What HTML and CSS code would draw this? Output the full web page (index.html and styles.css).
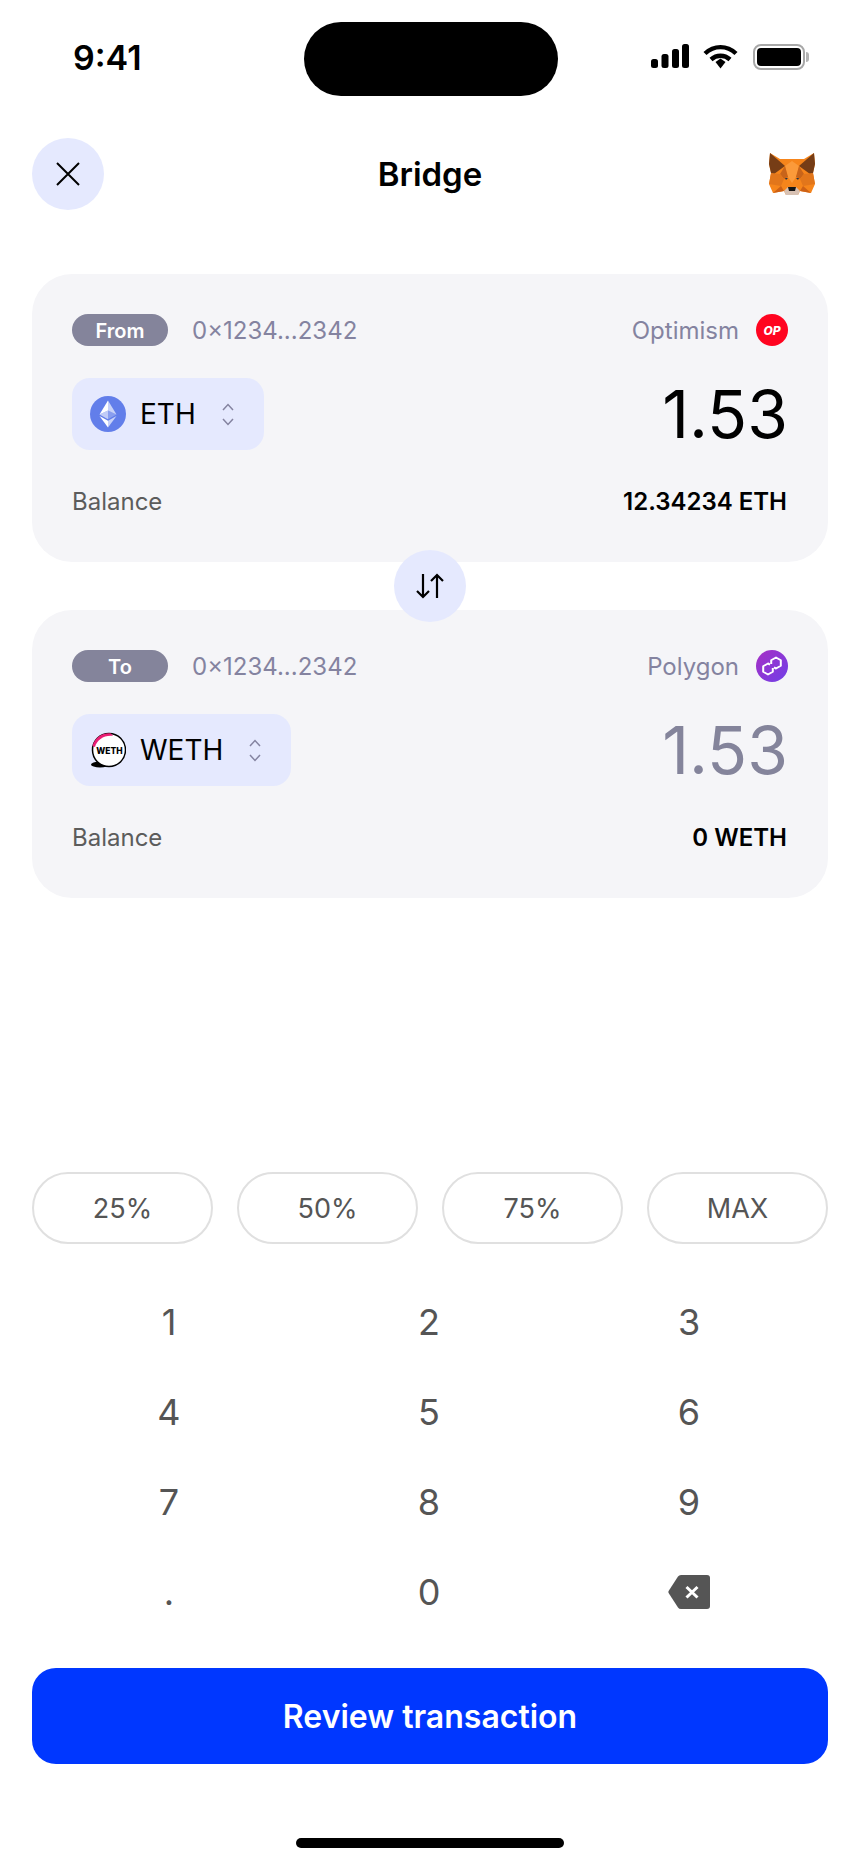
FILE: index.html
```html
<!DOCTYPE html>
<html lang="en">
<head>
  <meta charset="UTF-8" />
  <meta name="viewport" content="width=device-width, initial-scale=1.0" />
  <title>Bridge</title>
  <link rel="stylesheet" href="styles.css">
</head>
<body>
  <div class="phone">
    <div class="status-bar">
      <span class="time">9:41</span>
      <div class="island"></div>
      <div class="status-icons">
        <svg class="signal" width="38" height="24" viewBox="0 0 38 24" fill="#000">
          <rect x="0" y="15" width="7" height="9" rx="2.5" />
          <rect x="10.5" y="10" width="7" height="14" rx="2.5" />
          <rect x="21" y="5" width="7" height="19" rx="2.5" />
          <rect x="31" y="0" width="7" height="24" rx="2.5" />
        </svg>
        <svg class="wifi" width="35" height="25" viewBox="0 0 35 25" fill="none" stroke="#000" stroke-width="4.4">
          <path d="M2 9.5C11 1 24 1 33 9.5" />
          <path d="M8 15.5C13.5 10.5 21.5 10.5 27 15.5" />
          <path d="M12.5 18L17.5 14.5L22.5 18L17.5 24.5Z" fill="#000" stroke="none" />
        </svg>
        <div class="battery"><div class="battery-fill"></div></div>
      </div>
    </div>

    <header class="top-bar">
      <button class="round-btn">
        <svg width="24" height="24" viewBox="0 0 24 24" fill="none" stroke="#000" stroke-width="2">
          <path d="M1 1L23 23M23 1L1 23" />
        </svg>
      </button>
      <h1>Bridge</h1>
      <svg class="fox" width="46" height="42" viewBox="0 0 46 42">
        <polygon fill="#f6851b" points="1,0 11,6 35,6 45,0 46,11 44,20 46,31 42,40 31,38 29,42 17,42 15,38 4,40 0,31 2,20 0,11" />
        <polygon fill="#763d16" points="1,0 16,13 5,21 2,20 0,11" />
        <polygon fill="#763d16" points="45,0 30,13 41,21 44,20 46,11" />
        <polygon fill="#fb9a3a" points="16,13 23,8 30,13 27,24 23,30 19,24" />
        <polygon fill="#c8641a" points="11,21 16,13 19,24 15,26" />
        <polygon fill="#c8641a" points="35,21 30,13 27,24 31,26" />
        <polygon fill="#233447" points="16,25 19,25 17,27" />
        <polygon fill="#233447" points="30,25 27,25 29,27" />
        <polygon fill="#e2761b" points="2,20 11,21 15,26 12,33 0,31" />
        <polygon fill="#e2761b" points="44,20 35,21 31,26 34,33 46,31" />
        <polygon fill="#cd6116" points="4,40 12,33 15,38" />
        <polygon fill="#cd6116" points="42,40 34,33 31,38" />
        <polygon fill="#d7c1b3" points="15,38 19,34 27,34 31,38 29,42 17,42" />
        <polygon fill="#161616" points="19,34 27,34 26,38 20,38" />
      </svg>
    </header>

    <main class="cards">
      <section class="card">
        <div class="card-row">
          <div class="account">
            <span class="pill">From</span>
            <span class="address">0×1234...2342</span>
          </div>
          <div class="network">
            <span>Optimism</span>
            <span class="badge badge-op">OP</span>
          </div>
        </div>
        <div class="card-row token-row">
          <button class="token">
            <svg width="36" height="36" viewBox="0 0 36 36">
              <circle cx="18" cy="18" r="18" fill="#627eea" />
              <polygon fill="#fff" fill-opacity=".65" points="18,4.5 18,14.5 26.5,18.4" />
              <polygon fill="#fff" points="18,4.5 9.5,18.4 18,14.5" />
              <polygon fill="#fff" fill-opacity=".65" points="18,24.8 18,31.5 26.5,20" />
              <polygon fill="#fff" points="18,31.5 18,24.8 9.5,20" />
              <polygon fill="#fff" fill-opacity=".25" points="18,23.2 26.5,18.4 18,14.5" />
              <polygon fill="#fff" fill-opacity=".6" points="9.5,18.4 18,23.2 18,14.5" />
            </svg>
            <span class="token-name">ETH</span>
            <svg class="chevrons" width="12" height="24" viewBox="0 0 12 24" fill="none" stroke="#8483a0" stroke-width="1.5">
              <path d="M1 8L6 2.5L11 8M1 17L6 22.5L11 17" />
            </svg>
          </button>
          <span class="amount">1.53</span>
        </div>
        <div class="card-row balance-row">
          <span class="balance-label">Balance</span>
          <span class="balance-value">12.34234 ETH</span>
        </div>
      </section>

      <button class="round-btn swap">
        <svg width="28" height="26" viewBox="0 0 28 26" fill="none" stroke="#000" stroke-width="2.2">
          <path d="M7 1V24M1 18L7 24L13 18" />
          <path d="M21 25V2M15 8L21 2L27 8" />
        </svg>
      </button>

      <section class="card">
        <div class="card-row">
          <div class="account">
            <span class="pill">To</span>
            <span class="address">0×1234...2342</span>
          </div>
          <div class="network">
            <span>Polygon</span>
            <span class="badge badge-polygon">
              <svg width="22" height="20" viewBox="0 0 22 20" fill="none" stroke="#fff" stroke-width="2" stroke-linejoin="round">
                <path d="M11.800 12V15.750L7 18.500L2.200 15.750V10.250L7 7.500L9 8.600" />
                <path d="M10.200 8V4.250L15 1.500L19.800 4.250V9.750L15 12.500L13 11.400" />
              </svg>
            </span>
          </div>
        </div>
        <div class="card-row token-row">
          <button class="token">
            <svg width="36" height="36" viewBox="0 0 36 36">
              <ellipse cx="10" cy="32.5" rx="9" ry="3" fill="#000" />
              <circle cx="19" cy="18" r="16.5" fill="#fff" stroke="#000" stroke-width="1.5" />
              <path d="M2.5 14C5 5 13 0.5 21 1.5L23 4C14 3 7 8 5 15Z" fill="#ea1e74" />
              <text class="weth-mark" x="19.5" y="21.5" text-anchor="middle">WETH</text>
            </svg>
            <span class="token-name">WETH</span>
            <svg class="chevrons" width="12" height="24" viewBox="0 0 12 24" fill="none" stroke="#8483a0" stroke-width="1.5">
              <path d="M1 8L6 2.5L11 8M1 17L6 22.5L11 17" />
            </svg>
          </button>
          <span class="amount amount-muted">1.53</span>
        </div>
        <div class="card-row balance-row">
          <span class="balance-label">Balance</span>
          <span class="balance-value">0 WETH</span>
        </div>
      </section>
    </main>

    <div class="percents">
      <button class="percent">25%</button>
      <button class="percent">50%</button>
      <button class="percent">75%</button>
      <button class="percent">MAX</button>
    </div>

    <div class="keypad">
      <button class="key">1</button>
      <button class="key">2</button>
      <button class="key">3</button>
      <button class="key">4</button>
      <button class="key">5</button>
      <button class="key">6</button>
      <button class="key">7</button>
      <button class="key">8</button>
      <button class="key">9</button>
      <button class="key">.</button>
      <button class="key">0</button>
      <button class="key">
        <svg width="42" height="34" viewBox="0 0 42 34">
          <path fill="#555" d="M10 1.5Q11 0 13 0H39Q42 0 42 3V31Q42 34 39 34H13Q11 34 10 32.500L0.600 18Q0 17 0.600 16Z" />
          <path fill="none" stroke="#fff" stroke-width="3" d="M18.500 12L29.500 22.500M29.500 12L18.500 22.500" />
        </svg>
      </button>
    </div>

    <button class="review">Review transaction</button>
    <div class="home-indicator"></div>
  </div>
</body>
</html>
```

FILE: styles.css
```css
* {
  box-sizing: border-box;
}

body {
  margin: 0;
  background-color: #fff;
  font-family: Inter, "Liberation Sans", sans-serif;
  color: #000;
}

button {
  border: none;
  padding: 0;
  background: none;
  font-family: inherit;
  cursor: pointer;
}

.phone {
  width: 860px;
  height: 1864px;
  overflow: hidden;
  display: flex;
  flex-direction: column;
}

.status-bar {
  display: grid;
  grid-template-columns: 304px 254px 1fr;
  height: 138px;
  padding-top: 22px;
}

.time {
  padding: 16px 0 0 73px;
  font-size: 34px;
  line-height: 40px;
  font-weight: 600;
}

.island {
  height: 74px;
  border-radius: 37px;
  background-color: #000;
}

.status-icons {
  display: flex;
  align-items: flex-start;
  padding: 22px 0 0 93px;
}

.wifi {
  margin-left: 14px;
}

.battery {
  position: relative;
  width: 52px;
  height: 26px;
  margin-left: 15px;
  padding: 2px;
  border: 2px solid #a8a8a8;
  border-radius: 8px;
}

.battery::after {
  content: "";
  position: absolute;
  top: 6px;
  right: -6px;
  width: 3px;
  height: 10px;
  border-radius: 0 3px 3px 0;
  background-color: #b4b4b4;
}

.battery-fill {
  height: 100%;
  border-radius: 4px;
  background-color: #000;
}

.top-bar {
  display: grid;
  grid-template-columns: 72px 1fr 72px;
  align-items: center;
  justify-items: center;
  margin: 0 32px;
}

.top-bar h1 {
  margin: 0;
  font-size: 33px;
  font-weight: 600;
}

.round-btn {
  display: flex;
  align-items: center;
  justify-content: center;
  width: 72px;
  height: 72px;
  border-radius: 50%;
  background-color: #e5e9fe;
}

.cards {
  position: relative;
  display: flex;
  flex-direction: column;
  gap: 48px;
  margin: 64px 32px 0;
}

.swap {
  position: absolute;
  top: 276px;
  left: 362px;
}

.card {
  padding: 40px 40px 44px;
  border-radius: 40px;
  background-color: #f5f5f8;
}

.card-row {
  display: flex;
  align-items: center;
  justify-content: space-between;
}

.account,
.network {
  display: flex;
  align-items: center;
}

.pill {
  width: 96px;
  height: 32px;
  border-radius: 16px;
  background-color: #84849b;
  color: #fff;
  font-size: 20px;
  line-height: 35px;
  font-weight: 600;
  text-align: center;
}

.address {
  margin-left: 24px;
  font-size: 24px;
  color: #8483a0;
}

.network {
  font-size: 24px;
  color: #8483a0;
}

.badge {
  display: flex;
  align-items: center;
  justify-content: center;
  width: 32px;
  height: 32px;
  margin-left: 17px;
  border-radius: 50%;
  color: #fff;
}

.badge-op {
  background-color: #ff0420;
  font-size: 12px;
  font-weight: 800;
  font-style: italic;
}

.badge-polygon {
  background: linear-gradient(135deg, #a72fc4, #7040e8);
}

.token-row {
  margin-top: 32px;
}

.token {
  display: flex;
  align-items: center;
  height: 72px;
  padding: 0 30px 0 18px;
  border-radius: 18px;
  background-color: #e5e9fe;
}

.token-name {
  margin: 0 26px 0 14px;
  font-size: 28px;
  font-weight: 400;
  color: #000;
}

.amount {
  font-size: 66px;
  line-height: 72px;
  font-weight: 400;
}

.amount-muted {
  color: #84849b;
}

.balance-row {
  margin-top: 36px;
  line-height: 32px;
}

.balance-label {
  font-size: 24px;
  color: #5c5c5c;
}

.balance-value {
  margin-right: 1px;
  font-size: 24px;
  font-weight: 600;
}

.weth-mark {
  font-size: 8.5px;
  font-weight: 800;
  fill: #000;
}

.percents {
  display: grid;
  grid-template-columns: repeat(4, 1fr);
  gap: 24px;
  margin: 274px 32px 0;
}

.percent {
  height: 72px;
  border: 2px solid #e0e0e0;
  border-radius: 36px;
  font-size: 27px;
  color: #555;
}

.keypad {
  display: grid;
  grid-template-columns: repeat(3, 260px);
  margin: 33px 41px 0 39px;
}

.key {
  display: flex;
  align-items: center;
  justify-content: center;
  height: 90px;
  font-size: 36px;
  color: #555;
}

.review {
  height: 96px;
  margin: 31px 32px 0;
  border-radius: 24px;
  background-color: #0037ff;
  color: #fff;
  font-size: 32px;
  font-weight: 600;
}

.home-indicator {
  width: 268px;
  height: 10px;
  margin: 74px auto 0;
  border-radius: 5px;
  background-color: #000;
}
```
